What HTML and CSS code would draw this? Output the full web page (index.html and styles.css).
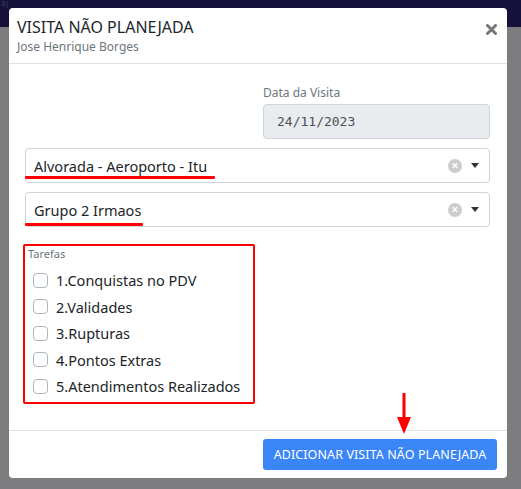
FILE: index.html
```html
<!DOCTYPE html>
<html lang="pt-BR">
<head>
<meta charset="utf-8">
<link rel="stylesheet" href="styles.css">
</head>
<body>
<div class="topbar"><span class="topbar-text">3|</span></div>
<div class="modal">
  <div class="modal-header">
    <div class="titles">
      <div class="title">VISITA NÃO PLANEJADA</div>
      <div class="subtitle">Jose Henrique Borges</div>
    </div>
    <svg class="close" width="11" height="11" viewBox="0 0 11 11">
      <path d="M1.5 1.5 L9.5 9.5 M9.5 1.5 L1.5 9.5" stroke="#777" stroke-width="3" stroke-linecap="round"/>
    </svg>
  </div>
  <div class="modal-body">
    <div class="date-row">
      <div class="date-group">
        <label class="label">Data da Visita</label>
        <div class="date-input">24/11/2023</div>
      </div>
    </div>
    <div class="select">
      <span class="select-value">Alvorada - Aeroporto - Itu</span>
      <span class="clear">×</span>
      <span class="caret"></span>
      <span class="underline u1"></span>
    </div>
    <div class="select">
      <span class="select-value">Grupo 2 Irmaos</span>
      <span class="clear">×</span>
      <span class="caret"></span>
      <span class="underline u2"></span>
    </div>
    <div class="tasks">
      <div class="tasks-label">Tarefas</div>
      <label class="task"><span class="cb"></span>1.Conquistas no PDV</label>
      <label class="task"><span class="cb"></span>2.Validades</label>
      <label class="task"><span class="cb"></span>3.Rupturas</label>
      <label class="task"><span class="cb"></span>4.Pontos Extras</label>
      <label class="task"><span class="cb"></span>5.Atendimentos Realizados</label>
    </div>
  </div>
  <div class="modal-footer">
    <button class="btn">ADICIONAR VISITA NÃO PLANEJADA</button>
    <svg class="arrow" width="16" height="42" viewBox="0 0 16 42">
      <line x1="8" y1="0" x2="8" y2="26" stroke="#f00" stroke-width="3"/>
      <polygon points="1,24 15,24 8,41" fill="#f00"/>
    </svg>
  </div>
</div>
</body>
</html>
```
FILE: styles.css
```css
* { box-sizing: border-box; }
html, body { margin: 0; }
body {
  width: 521px;
  height: 489px;
  background: #7d7d7f;
  font-family: "Noto Sans", "Open Sans", sans-serif;
  color: #212529;
  padding: 8px 0 0 9px;
  position: relative;
  overflow: hidden;
}
.topbar {
  position: absolute;
  left: 0; top: 0;
  width: 521px; height: 27px;
  background: #15113a;
}
.topbar-text {
  color: #4c4868;
  font-size: 7px;
  line-height: 7px;
  position: absolute;
  left: 1px; top: 0;
}
.modal {
  position: relative;
  width: 498px;
  height: 470px;
  background: #fff;
  border-radius: 4px;
  display: flex;
  flex-direction: column;
}
.modal-header {
  height: 56px;
  border-bottom: 1px solid #dee2e6;
  padding: 9px 10px 0 8px;
  display: flex;
  justify-content: space-between;
}
.title {
  font-size: 16px;
  line-height: 21px;
  color: #212529;
}
.subtitle {
  font-size: 12px;
  line-height: 16px;
  color: #6c757d;
  margin-top: 1px;
}
.close {
  margin-top: 7px;
}
.modal-body {
  flex: 1;
  padding: 21px 17px 0 16px;
}
.date-row {
  display: flex;
  justify-content: flex-end;
}
.date-group {
  width: 227px;
}
.label {
  display: block;
  font-size: 12px;
  line-height: 16px;
  color: #6c757d;
  margin-bottom: 3px;
}
.date-input {
  height: 35px;
  background: #e9ecef;
  border: 1px solid #ced4da;
  border-radius: 4px;
  font-family: "DejaVu Sans Mono", monospace;
  font-size: 13px;
  color: #495057;
  padding: 0 0 0 13px;
  line-height: 33px;
}
.select {
  position: relative;
  height: 35px;
  border: 1px solid #ced4da;
  border-radius: 4px;
  margin-top: 9px;
  display: flex;
  align-items: center;
  padding: 0 10px 0 8px;
  font-size: 14.5px;
}
.select-value { flex: 1; color: #212529; }
.clear {
  width: 14px; height: 14px;
  border-radius: 50%;
  background: #ccc;
  color: #fff;
  font-size: 12px;
  line-height: 14px;
  text-align: center;
  font-weight: bold;
  margin-right: 9px;
}
.caret {
  width: 0; height: 0;
  border-left: 4.5px solid transparent;
  border-right: 4.5px solid transparent;
  border-top: 5px solid #333;
}
.underline {
  position: absolute;
  left: -1px;
  bottom: 3px;
  height: 3px;
  background: #f00;
  border-radius: 1px;
}
.u1 { width: 190px; }
.u2 { width: 118px; bottom: 0px; }
.tasks {
  margin: 17px 0 0 -2px;
  width: 232px;
  height: 160px;
  border: 2px solid #f00;
  border-radius: 2px;
  padding: 1px 0 0 3px;
}
.tasks-label {
  font-size: 11px;
  line-height: 14px;
  color: #6c757d;
  margin-bottom: 6px;
}
.task {
  display: flex;
  align-items: center;
  height: 26.5px;
  font-size: 14.5px;
  color: #212529;
  padding-left: 5px;
}
.cb {
  width: 15px; height: 15px;
  border: 1px solid #adb5bd;
  border-radius: 4px;
  margin-right: 8px;
  background: #fff;
}
.modal-footer {
  position: relative;
  height: 48px;
  border-top: 1px solid #dee2e6;
  display: flex;
  justify-content: flex-end;
  align-items: flex-start;
  padding: 8px 10px 0 0;
}
.btn {
  height: 31px;
  width: 234px;
  background: #3a86f7;
  border: none;
  border-radius: 3px;
  color: #fff;
  font-family: inherit;
  font-size: 12.5px;
  letter-spacing: 0.1px;
  padding: 0;
}
.arrow {
  position: absolute;
  left: 387px;
  top: -38px;
}
```
